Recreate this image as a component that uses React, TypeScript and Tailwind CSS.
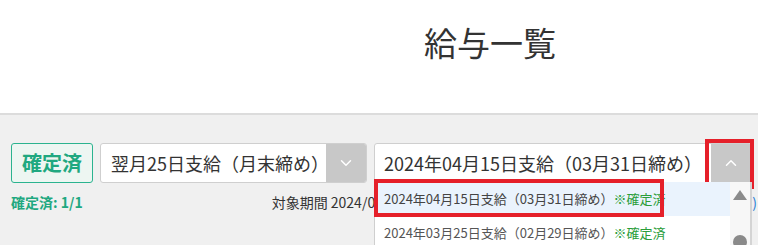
import { ChevronDown, ChevronUp } from "lucide-react";

const font = { fontFamily: '"Noto Sans CJK JP", "Noto Sans", sans-serif' };

export default function App() {
  return (
    <div className="w-[758px] h-[245px] overflow-hidden bg-[#f0f0f0]" style={font}>
      <header className="h-[115px] bg-white border-b-2 border-[#dcdcdc] flex justify-center pt-[22px]">
        <h1 className="text-[33px] text-[#333] leading-[40px] pl-[222px]">給与一覧</h1>
      </header>

      <div className="pl-[11px] pt-[28px]">
        <div className="flex items-center gap-[7px] h-[40px]">
          <div className="w-[82px] h-[40px] rounded-[3px] border border-[#2bb38f] bg-[#edf6f2] flex items-center justify-center text-[20px] font-bold text-[#1fa880]">
            確定済
          </div>

          <div className="w-[267px] h-[40px] rounded-[3px] border border-[#cfcfcf] bg-white flex overflow-hidden">
            <div className="flex-1 flex items-center pl-[10px] text-[18px] text-[#333]">
              翌月25日支給（月末締め）
            </div>
            <div className="w-[40px] bg-[#c8c8c8] flex items-center justify-center">
              <ChevronDown className="w-[18px] h-[18px] text-white" strokeWidth={2} />
            </div>
          </div>

          <div className="relative w-[378px] h-[40px]">
            <div className="h-full rounded-t-[3px] border border-[#cfcfcf] bg-white flex">
              <div className="flex-1 flex items-center pl-[9px] text-[18px] text-[#333]">
                2024年04月15日支給（03月31日締め）
              </div>
              <div className="w-[40px] bg-[#c8c8c8] flex items-center justify-center">
                <ChevronUp className="w-[18px] h-[18px] text-white" strokeWidth={2} />
              </div>
            </div>
            <div className="absolute left-[331px] -top-[4px] w-[49px] h-[50px] border-[4px] border-[#e5202a]" />

            <div className="absolute left-0 top-[39px] w-[378px] h-[80px] bg-white border-l border-[#cfcfcf] flex">
              <ul className="w-[355px] text-[13px]">
                <li className="relative h-[34px] bg-[#eaf3fd] flex items-center pl-[9px] text-[#444]">
                  2024年04月15日支給（03月31日締め）
                  <span className="text-[#2a9d3a]">※確定済</span>
                  <div className="absolute -left-[1px] -top-[3px] w-[290px] h-[38px] border-[4px] border-[#e5202a]" />
                </li>
                <li className="h-[34px] flex items-center pl-[9px] text-[#555]">
                  2024年03月25日支給（02月29日締め）
                  <span className="text-[#2a9d3a]">※確定済</span>
                </li>
              </ul>
              <div className="flex-1 bg-[#f7f7f7] border-r-2 border-[#d4d4d4] relative">
                <div className="absolute left-[3px] top-[8px] w-0 h-0 border-l-[7px] border-r-[7px] border-b-[10px] border-l-transparent border-r-transparent border-b-[#8a8a8a]" />
                <div className="absolute left-[3px] top-[53px] w-[14px] h-[14px] rounded-full bg-[#8a8a8a]" />
              </div>
            </div>
          </div>
        </div>

        <div className="flex items-center h-[38px] text-[14px]">
          <span className="font-bold text-[#1fa880]">確定済: 1/1</span>
          <span className="ml-[189px] text-[#333]">対象期間 2024/03/01〜2024/03/31</span>
          <span className="ml-auto mr-[1px] text-[#2a7fd4]">(変更)</span>
        </div>
      </div>
    </div>
  );
}
